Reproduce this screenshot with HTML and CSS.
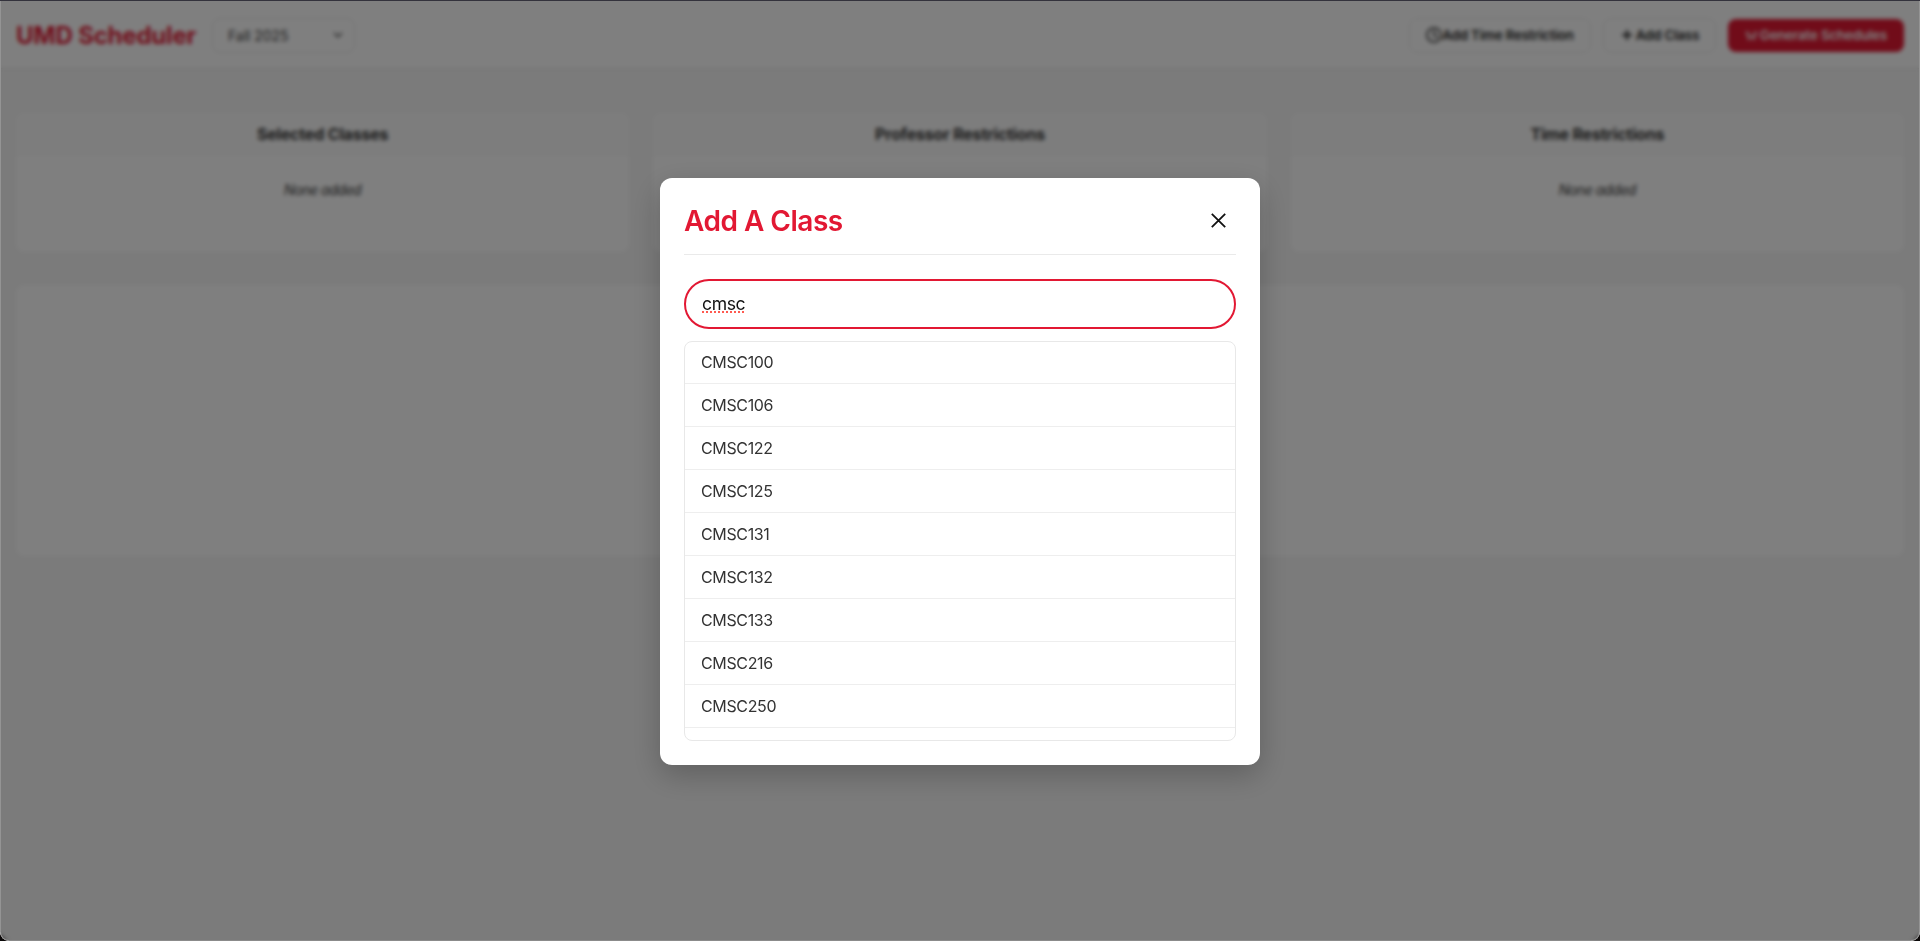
FILE: index.html
```html
<!DOCTYPE html>
<html lang="en">
<head>
<meta charset="utf-8">
<title>UMD Scheduler</title>
<link rel="stylesheet" href="styles.css">
</head>
<body>
<div class="window">
  <header class="topbar">
    <h1 class="brand">UMD Scheduler</h1>
    <div class="select">Fall 2025
      <svg width="10" height="6" viewBox="0 0 10 6" fill="none" stroke="#444" stroke-width="1.4"><path d="M1 .8 5 4.8 9 .8"/></svg>
    </div>
    <nav class="actions">
      <button class="btn btn-time"><svg width="16" height="16" viewBox="0 0 16 16" fill="none" stroke="#222" stroke-width="1.600"><circle cx="8" cy="8" r="7"/><path d="M8 3.500V8l3 2"/></svg><span>Add Time Restriction</span></button>
      <button class="btn btn-add"><svg width="10" height="10" viewBox="0 0 10 10" stroke="#222" stroke-width="2"><path d="M5 0v10M0 5h10"/></svg><span>Add Class</span></button>
      <button class="btn btn-go"><svg width="13" height="11" viewBox="0 0 13 11" fill="none" stroke="#fff" stroke-width="1.300"><path d="M1 1.500 4 9.500 6.500 5 9 9.500 12 1.500M3.500 1.500v3M9.500 1.500v3"/></svg><span>Generate Schedules</span></button>
    </nav>
  </header>
  <main class="content">
    <div class="panels">
      <section class="panel"><h2>Selected Classes</h2><p>None added</p></section>
      <section class="panel"><h2>Professor Restrictions</h2><p>None added</p></section>
      <section class="panel"><h2>Time Restrictions</h2><p>None added</p></section>
    </div>
    <section class="results"></section>
  </main>
  <div class="overlay">
    <div class="modal">
      <div class="modal-head">
        <h2>Add A Class</h2>
        <svg class="close" width="15" height="15" viewBox="0 0 15 15" stroke="#111" stroke-width="1.800"><path d="M.8.8l13.400 13.400M14.200.8.8 14.200"/></svg>
      </div>
      <div class="search"><span>cmsc</span></div>
      <ul class="list">
        <li>CMSC100</li><li>CMSC106</li><li>CMSC122</li><li>CMSC125</li><li>CMSC131</li><li>CMSC132</li><li>CMSC133</li><li>CMSC216</li><li>CMSC250</li>
      </ul>
    </div>
  </div>
</div>
</body>
</html>
```
FILE: styles.css
```css
* { box-sizing: border-box; margin: 0; padding: 0; }
html { background: #0b0808; }
body { height: 941px; overflow: hidden; border-top: 1px solid #33323c; font-family: Inter, "Liberation Sans", sans-serif; color: #333; }
.window { position: relative; height: 940px; background: #f6f6f6; border-radius: 0 0 9px 9px; overflow: hidden; }
.topbar { height: 68px; display: flex; align-items: center; padding: 1px 16px 0; background: #fff; border-bottom: 1px solid #e6e6e6; }
.brand { width: 196px; font-size: 24px; font-weight: 700; color: #e21833; white-space: nowrap; letter-spacing: -.2px; }
.select { width: 143px; height: 35px; display: flex; align-items: center; justify-content: space-between; padding: 0 11px 0 15px; border: 1px solid #e6e6e6; border-radius: 8px; font-size: 14px; color: #444; letter-spacing: -.05px; }
.actions { margin-left: auto; display: flex; align-items: center; gap: 12px; }
.btn { height: 35px; display: flex; align-items: center; justify-content: center; border: 1px solid #e9e9e9; border-radius: 8px; background: #fff; font: 600 13.3px Inter, sans-serif; letter-spacing: -.14px; color: #222; white-space: nowrap; }
.btn-time { width: 182px; }
.btn-add { width: 113px; gap: 4px; padding-left: 2px; }
.btn-go { width: 176px; height: 33px; background: #e21833; border: 0; color: #fff; gap: 2px; }
.content { padding: 44px 16px 0; }
.panels { display: grid; grid-template-columns: repeat(3, 1fr); gap: 24px; }
.panel { height: 139px; background: #fff; border-radius: 8px; overflow: hidden; text-align: center; }
.panel h2 { height: 42px; line-height: 42px; font-size: 16px; font-weight: 700; letter-spacing: -.18px; background: #fbfbfb; border-bottom: 1px solid #f3f3f3; }
.panel p { margin-top: 26px; font-size: 14px; line-height: 18px; font-style: italic; letter-spacing: -.45px; }
.results { margin-top: 33px; height: 271px; background: #fff; border-radius: 8px; }
.overlay { position: absolute; inset: 0; padding-top: 177px; background: rgba(0,0,0,.5); backdrop-filter: blur(2px); box-shadow: inset 1px 0 #949494, inset -1px 0 #949494, inset 0 -1px #8b8b8b; border-radius: 0 0 9px 9px; }
.modal { width: 600px; height: 587px; margin: 0 auto; padding: 0 24px; background: #fff; border-radius: 12px; box-shadow: 0 10px 30px rgba(0,0,0,.22); }
.modal-head { height: 77px; display: flex; align-items: center; justify-content: space-between; padding: 9px 10.500px 0 0; border-bottom: 1px solid #eaeaea; }
.modal-head h2 { font-size: 28px; font-weight: 600; line-height: 34px; letter-spacing: -.5px; color: #e21833; }
.close { margin-bottom: 1px; }
.search { margin-top: 24px; height: 50px; display: flex; align-items: center; padding: 0 16px 2px; border: 2px solid #e21833; border-radius: 25px; font-size: 17.6px; letter-spacing: -.4px; color: #111; }
.search span { text-decoration: underline dotted #ff5a50 2px; text-underline-offset: 2px; text-decoration-skip-ink: none; }
.list { margin-top: 12px; height: 400px; overflow: hidden; border: 1px solid #e8e8e8; border-radius: 8px; list-style: none; }
.list li { height: 43px; line-height: 43px; padding-left: 16px; font-size: 16px; letter-spacing: -.36px; color: #333; border-bottom: 1px solid #eee; }
.list li:first-child { height: 42px; line-height: 41px; }
```
